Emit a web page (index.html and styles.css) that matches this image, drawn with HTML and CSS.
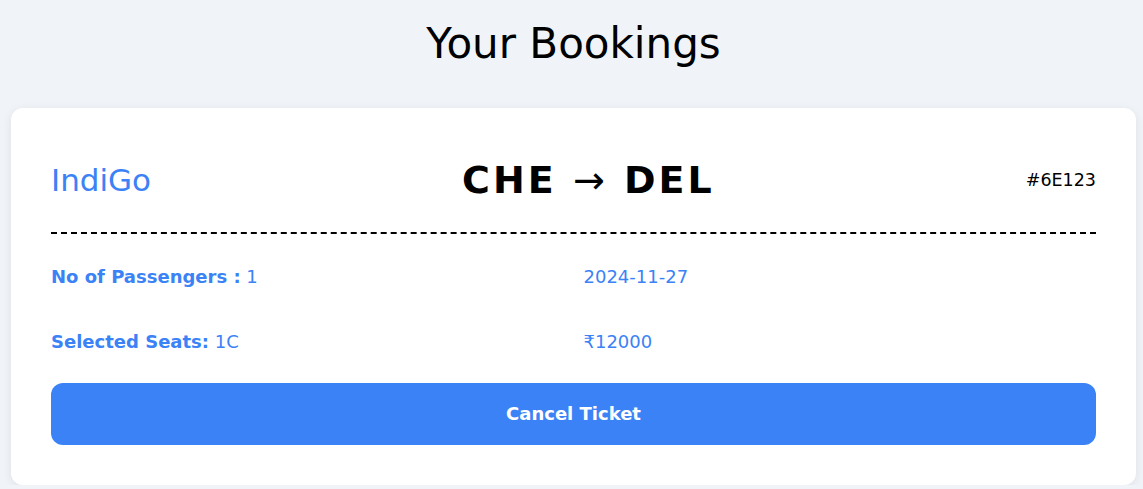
FILE: index.html
```html
<!DOCTYPE html>
<html lang="en">
<head>
<meta charset="utf-8">
<title>Your Bookings</title>
<link rel="stylesheet" href="styles.css">
</head>
<body>
<main class="page">
  <h1 class="page-title">Your Bookings</h1>
  <section class="booking-card">
    <div class="booking-header">
      <span class="airline">IndiGo</span>
      <span class="route">CHE <span class="arrow">→</span> DEL</span>
      <span class="flight-no">#6E123</span>
    </div>
    <div class="booking-details">
      <p class="detail"><strong>No of Passengers :</strong> 1</p>
      <p class="detail">2024-11-27</p>
      <p class="detail"><strong>Selected Seats:</strong> 1C</p>
      <p class="detail">₹12000</p>
    </div>
    <button class="cancel-btn" type="button">Cancel Ticket</button>
  </section>
</main>
</body>
</html>
```

FILE: styles.css
```css
* { box-sizing: border-box; }

html, body {
  margin: 0;
  padding: 0;
  background: #f0f4f8;
  font-family: "DejaVu Sans", "Liberation Sans", sans-serif;
}

.page {
  padding: 20px 7px 0 11px;
}

.page-title {
  margin: 0 0 40px;
  text-align: center;
  font-size: 42px;
  line-height: 48px;
  font-weight: 400;
  color: #000;
}

.booking-card {
  background: #fff;
  border-radius: 12px;
  box-shadow: 0 2px 10px rgba(0, 0, 0, 0.08);
  padding: 40px;
}

.booking-header {
  display: flex;
  align-items: center;
  justify-content: space-between;
  padding: 8px 0 28px;
  border-bottom: 2px dashed #000;
  line-height: 48px;
}

.airline {
  color: #3b82f6;
  font-size: 31px;
  font-weight: 400;
}

.route {
  font-size: 38px;
  font-weight: 700;
  letter-spacing: 3px;
  color: #000;
}

.arrow {
  font-weight: 400;
}

.flight-no {
  text-align: right;
  font-size: 17.5px;
  color: #000;
}

.booking-details {
  display: grid;
  grid-template-columns: 1fr 1fr;
  column-gap: 20px;
  row-gap: 38px;
  padding: 29px 0 28px;
}

.detail {
  margin: 0;
  font-size: 18px;
  line-height: 27px;
  color: #3b82f6;
}

.detail strong {
  font-weight: 700;
}

.cancel-btn {
  display: block;
  width: 100%;
  border: 0;
  border-radius: 12px;
  background: #3b82f6;
  color: #fff;
  font-family: inherit;
  font-size: 18px;
  font-weight: 700;
  line-height: 26px;
  padding: 18px 0;
}
```
